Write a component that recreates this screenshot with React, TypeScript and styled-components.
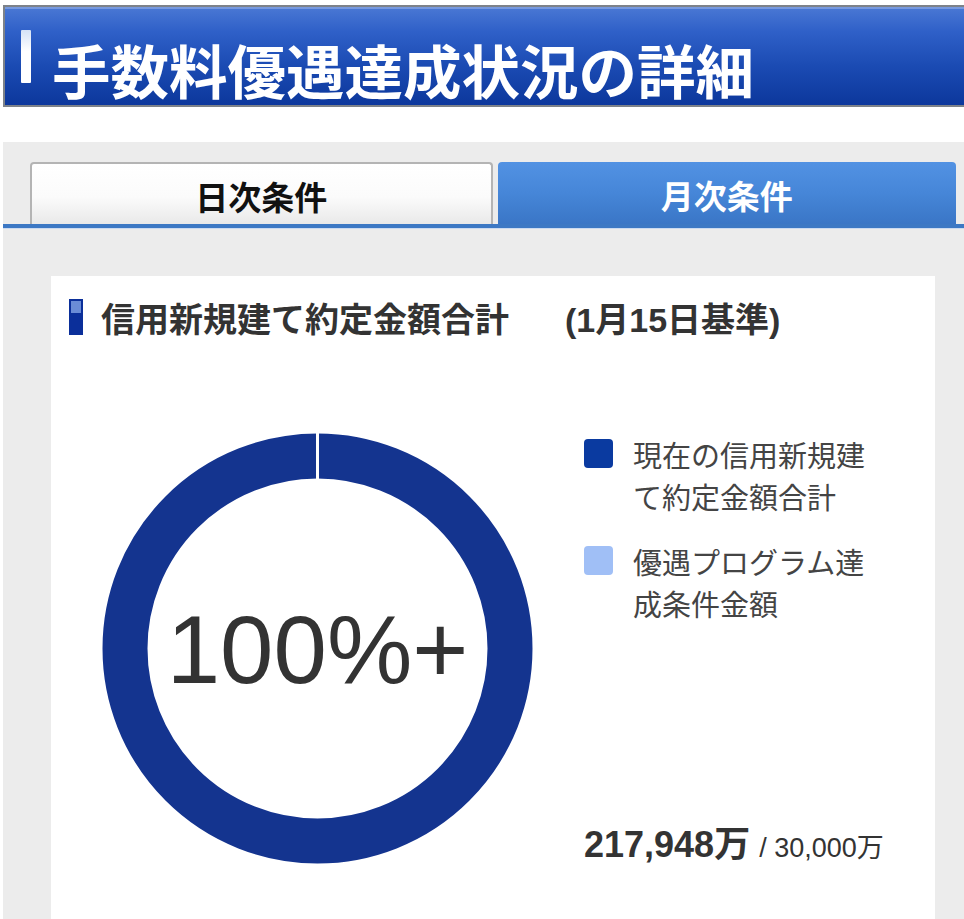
import React from "react";
import styled, { createGlobalStyle } from "styled-components";

const GlobalStyle = createGlobalStyle`
  html, body { margin: 0; padding: 0; background: #ffffff; }
  body { font-family: "Liberation Sans", "Noto Sans CJK JP", sans-serif; overflow: hidden; }
`;

const Page = styled.div`
  width: 964px;
  height: 919px;
  overflow: hidden;
  padding: 5px 0 0 3px;
  box-sizing: border-box;
`;

const Header = styled.header`
  display: flex;
  align-items: flex-start;
  height: 102px;
  box-sizing: border-box;
  margin-right: -12px;
  border: 2px solid #7d8289;
  background: linear-gradient(to bottom, #4a78d4 0%, #2f60c8 25%, #1b4bb3 60%, #0c379c 100%);
  box-shadow: inset 0 2px 0 rgba(255, 255, 255, 0.25);
  padding-left: 16px;
`;

const HeaderMark = styled.span`
  display: block;
  width: 10px;
  height: 53px;
  margin-top: 23px;
  border-radius: 1px;
  background: linear-gradient(to bottom, #d5e2f6 0%, #ffffff 40%, #ffffff 100%);
`;

const HeaderTitle = styled.h1`
  margin: 33px 0 0 21px;
  font-family: "Noto Sans CJK JP", sans-serif;
  font-weight: 700;
  font-size: 58.5px;
  line-height: 58px;
  color: #ffffff;
  white-space: nowrap;
`;

const Section = styled.section`
  margin-top: 35px;
  background: #ececec;
  padding-top: 20px;
  padding-bottom: 60px;
`;

const TabBar = styled.div`
  display: flex;
  gap: 5px;
  padding: 0 8px 0 27px;
  border-bottom: 4px solid #3c78c4;
  box-shadow: 0 1px 0 #cbdaf0;
`;

const Tab = styled.div<{ $active?: boolean }>`
  flex: 1;
  height: 62px;
  box-sizing: border-box;
  display: flex;
  align-items: center;
  justify-content: center;
  padding-top: 4px;
  border-radius: 4px 4px 0 0;
  font-family: "Noto Sans CJK JP", sans-serif;
  font-weight: 700;
  font-size: 33px;
  color: ${(p) => (p.$active ? "#ffffff" : "#111111")};
  border: ${(p) => (p.$active ? "none" : "2px solid #b4b4b4")};
  border-bottom: none;
  background: ${(p) =>
    p.$active
      ? "linear-gradient(to bottom, #5292e3 0%, #4686d8 50%, #3a76c6 100%)"
      : "linear-gradient(to bottom, #ffffff 0%, #fbfbfb 55%, #e9e9e9 100%)"};
`;

const Card = styled.div`
  margin: 48px 29px 0 48px;
  background: #ffffff;
  padding: 23px 51px 80px 18px;
`;

const CardTitleRow = styled.div`
  display: flex;
  align-items: center;
  height: 36px;
`;

const CardMark = styled.span`
  display: block;
  width: 14px;
  height: 36px;
  background: linear-gradient(to bottom, #6a8cd6 0%, #6a8cd6 40%, #0b2f9a 40%, #0b2f9a 100%);
  box-shadow: inset 0 0 0 2px #0b2f9a;
`;

const CardTitle = styled.h2`
  margin: 0 0 0 18px;
  font-family: "Liberation Sans", "Noto Sans CJK JP", sans-serif;
  font-weight: 700;
  font-size: 34px;
  color: #333333;
  white-space: nowrap;
`;

const CardDate = styled.span`
  margin-left: 56px;
  font-family: "Liberation Sans", "Noto Sans CJK JP", sans-serif;
  font-weight: 700;
  font-size: 34px;
  color: #333333;
  white-space: nowrap;
`;

const ChartRow = styled.div`
  display: flex;
  gap: 51px;
  margin-top: 98px;
  padding-left: 33px;
`;

const DonutWrap = styled.div`
  position: relative;
  width: 431px;
  height: 431px;
  flex: none;
`;

const DonutLabel = styled.div`
  position: absolute;
  inset: 0;
  display: flex;
  align-items: center;
  justify-content: center;
  font-family: "Liberation Sans", sans-serif;
  font-size: 96px;
  color: #333333;
  padding-top: 2px;
`;

const Legend = styled.div`
  display: flex;
  flex-direction: column;
  flex: 1;
`;

const LegendItem = styled.div`
  display: flex;
  align-items: flex-start;
  gap: 20px;
  margin-bottom: 23px;
`;

const Swatch = styled.span<{ $color: string }>`
  display: block;
  flex: none;
  width: 29px;
  height: 29px;
  margin-top: 6px;
  border-radius: 4px;
  background: ${(p) => p.$color};
`;

const LegendText = styled.div`
  font-family: "Noto Sans CJK JP", sans-serif;
  font-size: 29px;
  line-height: 42px;
  color: #444444;
  width: 240px;
`;

const Amount = styled.div`
  margin-top: auto;
  margin-bottom: -8px;
  line-height: 40px;
  white-space: nowrap;
  color: #333333;
`;

const AmountMain = styled.span`
  font-family: "Liberation Sans", "Noto Sans CJK JP", sans-serif;
  font-weight: 700;
  font-size: 36px;
`;

const AmountSub = styled.span`
  font-family: "Liberation Sans", "Noto Sans CJK JP", sans-serif;
  font-size: 27px;
  margin-left: 9px;
`;

function Donut() {
  const size = 431;
  const c = size / 2;
  const r = 192.5;
  return (
    <svg width={size} height={size} viewBox={`0 0 ${size} ${size}`}>
      <circle cx={c} cy={c} r={r} fill="none" stroke="#14348f" strokeWidth={45} />
      <line x1={c} y1={0} x2={c} y2={47} stroke="#ffffff" strokeWidth={3} />
    </svg>
  );
}

export default function App() {
  return (
    <>
      <GlobalStyle />
      <Page>
        <Header>
          <HeaderMark />
          <HeaderTitle>手数料優遇達成状況の詳細</HeaderTitle>
        </Header>
        <Section>
          <TabBar>
            <Tab>日次条件</Tab>
            <Tab $active>月次条件</Tab>
          </TabBar>
          <Card>
            <CardTitleRow>
              <CardMark />
              <CardTitle>信用新規建て約定金額合計</CardTitle>
              <CardDate>(1月15日基準)</CardDate>
            </CardTitleRow>
            <ChartRow>
              <DonutWrap>
                <Donut />
                <DonutLabel>100%+</DonutLabel>
              </DonutWrap>
              <Legend>
                <LegendItem>
                  <Swatch $color="#0a3aa0" />
                  <LegendText>現在の信用新規建て約定金額合計</LegendText>
                </LegendItem>
                <LegendItem>
                  <Swatch $color="#a0bff6" />
                  <LegendText>優遇プログラム達成条件金額</LegendText>
                </LegendItem>
                <Amount>
                  <AmountMain>217,948万</AmountMain>
                  <AmountSub>/ 30,000万</AmountSub>
                </Amount>
              </Legend>
            </ChartRow>
          </Card>
        </Section>
      </Page>
    </>
  );
}
